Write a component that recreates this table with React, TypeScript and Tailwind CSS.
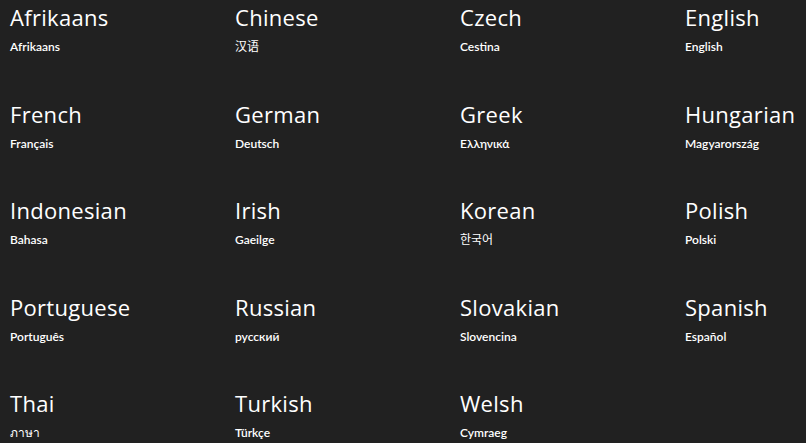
const languages = [
  { name: 'Afrikaans', native: 'Afrikaans' },
  { name: 'Chinese', native: '汉语', cjk: true },
  { name: 'Czech', native: 'Cestina' },
  { name: 'English', native: 'English' },
  { name: 'French', native: 'Français' },
  { name: 'German', native: 'Deutsch' },
  { name: 'Greek', native: 'Ελληνικά' },
  { name: 'Hungarian', native: 'Magyarország' },
  { name: 'Indonesian', native: 'Bahasa' },
  { name: 'Irish', native: 'Gaeilge' },
  { name: 'Korean', native: '한국어', cjk: true },
  { name: 'Polish', native: 'Polski' },
  { name: 'Portuguese', native: 'Português' },
  { name: 'Russian', native: 'русский' },
  { name: 'Slovakian', native: 'Slovencina' },
  { name: 'Spanish', native: 'Español' },
  { name: 'Thai', native: 'ภาษา', cjk: true },
  { name: 'Turkish', native: 'Türkçe' },
  { name: 'Welsh', native: 'Cymraeg' },
];

export default function App() {
  return (
    <div className="h-screen w-full bg-[#212121] text-white overflow-hidden">
      <div className="grid grid-cols-[225px_225px_225px_225px] pl-[10px] pt-[3px]">
        {languages.map(lang => (
          <div key={lang.name} className="h-[96.6px]">
            <div className="text-[22px] leading-[28px] font-normal font-['Open_Sans',sans-serif] tracking-[0.3px]">
              {lang.name}
            </div>
            <div
              className={
                "mt-[8px] text-[12px] leading-[16px] font-['Lato','Noto_Sans_CJK_SC','Noto_Sans_CJK_KR',sans-serif] " +
                (lang.cjk ? 'font-normal' : 'font-semibold')
              }
            >
              {lang.native}
            </div>
          </div>
        ))}
      </div>
    </div>
  );
}
